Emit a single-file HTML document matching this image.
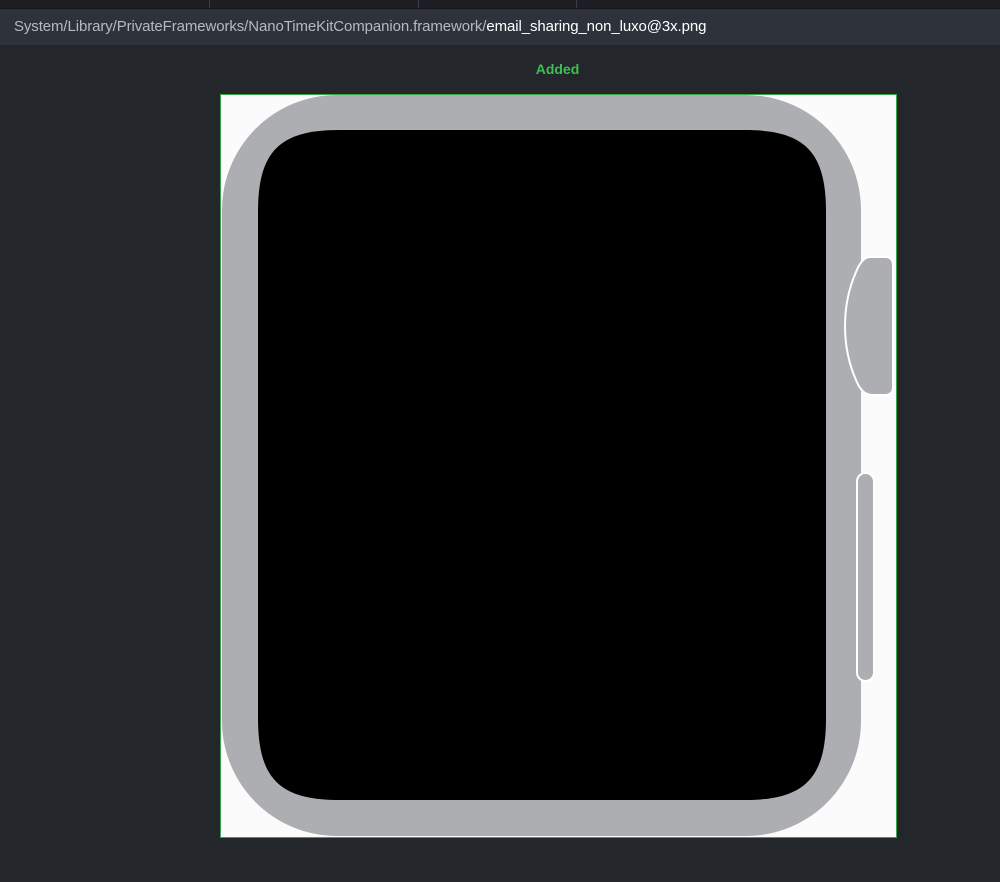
<!DOCTYPE html>
<html><head><meta charset="utf-8"><style>
html,body{margin:0;padding:0;width:1000px;height:882px;overflow:hidden;background:#23262b;font-family:"Liberation Sans",sans-serif;}
.top{position:absolute;left:0;top:0;width:1000px;height:8px;background:#1c1e24;border-bottom:1px solid #15171b;}
.top i{position:absolute;top:0;width:1px;height:8px;background:#3a3e46;}
.hdr{position:absolute;left:0;top:9px;width:1000px;height:36px;background:#2e333b;color:#b5bac2;font-size:15px;line-height:36px;padding-left:14px;box-sizing:border-box;letter-spacing:-0.1px;}
.hdr b{font-weight:normal;color:#fff;}
.added{position:absolute;left:0;width:1115px;text-align:center;top:61px;color:#3fbf52;font-size:14px;font-weight:bold;}
.box{position:absolute;left:220px;top:94px;width:675px;height:742px;background:#fbfbfb;border:1px solid #3aa64a;}
</style></head><body>
<div class="top"><i style="left:209px"></i><i style="left:418px"></i><i style="left:576px"></i></div>
<div class="hdr">System/Library/PrivateFrameworks/NanoTimeKitCompanion.framework/<b>email_sharing_non_luxo@3x.png</b></div>
<div class="added">Added</div>
<div class="box">
<svg width="675" height="742" viewBox="221 95 675 742" style="position:absolute;left:0;top:0">
<rect x="222" y="95" width="639" height="741" rx="115" ry="115" fill="#adaeb2"/>
<path d="M339 130 H745 C805 130 826 152 826 212 V718 C826 778 805 800 745 800 H339 C279 800 258 778 258 718 V212 C258 152 279 130 339 130 Z" fill="#000"/>
<path d="M870 257 H885 Q893 257 893 265 V387 Q893 395 885 395 H872 Q862 395 856 380 Q845 355 845 326 Q845 297 856 272 Q862 257 870 257 Z" fill="#adaeb2" stroke="#fff" stroke-width="2"/>
<rect x="857" y="473" width="17" height="208" rx="8.5" fill="#adaeb2" stroke="#fff" stroke-width="2"/>
</svg>
</div>
</body></html>
